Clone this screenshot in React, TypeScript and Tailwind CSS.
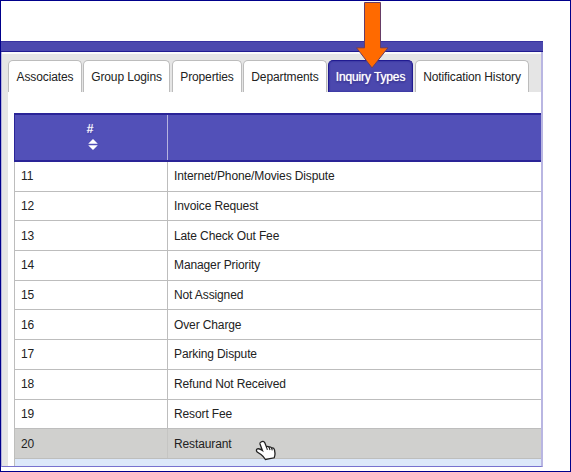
const tabs = [
  { label: 'Associates', box: 'w-[74px]', text: 'w-[58px]' },
  { label: 'Group Logins', box: 'w-[87px]', text: 'w-[69px]' },
  { label: 'Properties', box: 'w-[70px] ml-px', text: 'w-[53px]' },
  { label: 'Departments', box: 'w-[84px]', text: 'w-[67px]' },
  { label: 'Inquiry Types', box: 'w-[85px]', text: 'w-[71px]', active: true },
  { label: 'Notification History', box: 'w-[114px] ml-px', text: 'w-[97px]' },
];

const rows = [
  [11, 'Internet/Phone/Movies Dispute'],
  [12, 'Invoice Request'],
  [13, 'Late Check Out Fee'],
  [14, 'Manager Priority'],
  [15, 'Not Assigned'],
  [16, 'Over Charge'],
  [17, 'Parking Dispute'],
  [18, 'Refund Not Received'],
  [19, 'Resort Fee'],
  [20, 'Restaurant'],
];

function Pointer() {
  return (
    <svg className="absolute left-[253px] top-[438px] h-[22px] w-[22px]" viewBox="0 0 22 22">
      <path
        d="M7 3Q9.3 1.4 10.7 3.6L12.4 7.8Q13.8 6.8 15 8Q16.8 7.4 17.6 9Q19.9 8.6 20.5 10.8L21 14.4Q21.2 16.2 20.2 18.8L11.4 20.5Q9.8 17.6 7 15.5L3.2 13Q1.5 10.9 3.4 9.9Q5.6 9.3 8.4 11.4L6 5Q5.6 3.8 7 3Z"
        fill="#fff"
        stroke="#202020"
        strokeWidth="1.3"
      />
      <path d="M12.4 7.8L13.4 10.8M15 8L16 11M17.6 9L18.3 11.4" fill="none" stroke="#202020" strokeWidth="1.1" />
    </svg>
  );
}

export default function App() {
  return (
    <div className="relative h-[472px] w-[571px] overflow-hidden border border-[#00008b] bg-white pt-10 font-['Liberation_Sans',Arial,sans-serif] text-[12px] tracking-[-0.12px] text-[#222]">
      <div className="flex h-[426px] w-[542px] flex-col border-b border-l border-r-2 border-b-[#7772cf] border-l-[#b5b2dd] border-r-[#b9b6e2] bg-[#e5e5e5]">
        <div className="-ml-px -mr-0.5 h-[11px] shrink-0 border-b border-t border-b-[#211b91] border-t-[#3732a0] bg-[#4b48ae]" />
        <div className="h-0.5 shrink-0 bg-[#fafafa]" />
        <div className="flex h-[38px] shrink-0 items-end gap-px pl-[6px]">
          {tabs.map((t) => (
            <div
              key={t.label}
              className={`flex h-8 shrink-0 items-center justify-center whitespace-nowrap rounded-t-[5px] border border-b-0 ${t.box} ${
                t.active
                  ? 'border-[#211b91] bg-[#4b48ae] text-white shadow-[inset_0_0_2px_#211b91] [text-shadow:0_0_1px_#fff,0_1px_2px_#17116f]'
                  : 'border-[#bcbcbc] bg-white'
              }`}
            >
              <span className={`flex justify-center ${t.text}`}>{t.label}</span>
            </div>
          ))}
        </div>
        <div className="ml-[6px] flex flex-1 flex-col bg-white pl-[6px] pt-[21px]">
          <div className="flex h-[49px] shrink-0 border-b-2 border-t-2 border-[#2a2497] bg-[#5250b8] text-white">
            <div className="flex w-[154px] shrink-0 flex-col items-center border-l border-r border-l-[#2a2497] border-r-[#b6b4e0] pt-[6px]">
              <span className="mr-0.5 h-4 leading-4 [text-shadow:0_0_1px_#fff,0_1px_2px_#211b91]">#</span>
              <svg className="ml-1 mt-px h-[13px] w-[10px]" viewBox="0 0 10 13">
                <path d="M5 1L9.8 5.8H.2ZM.2 7.2H9.8L5 12Z" fill="#fff" />
              </svg>
            </div>
          </div>
          {rows.map(([id, name]) => (
            <div
              key={id}
              className={`flex h-[29.7px] shrink-0 items-center border-b border-l ${
                id === 20 ? 'border-[#bebebc] bg-[#d0d0ce]' : 'border-[#bdbdbd]'
              }`}
            >
              <div className={`flex h-full w-[153px] shrink-0 items-center border-r pl-[6px] ${id === 20 ? 'border-[#c5c5c3]' : 'border-[#bdbdbd]'}`}>
                {id}
              </div>
              <div className="pl-[6px]">{name}</div>
            </div>
          ))}
          <div className="flex-1 border-l border-[#bdbdbd] bg-[#dce8fa]" />
        </div>
      </div>
      <svg className="absolute left-[354px] top-0 h-[70px] w-9" viewBox="0 0 36 70">
        <path d="M9.5 1.5H25.5V46.8H33L17 66.9L1.5 46.8H9.5Z" fill="#ff6a00" stroke="#663d66" />
      </svg>
      <Pointer />
    </div>
  );
}
